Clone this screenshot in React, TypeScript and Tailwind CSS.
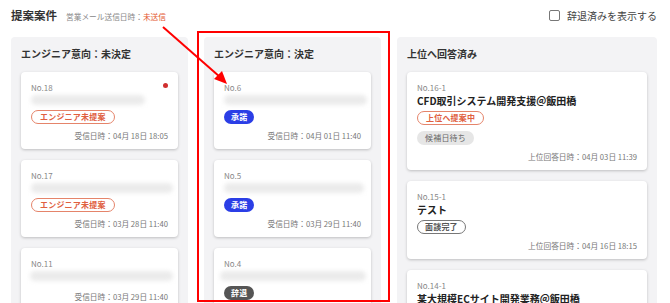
type Tone = 'orange' | 'blue' | 'dark' | 'soft' | 'gray';

const badgeClass: Record<Tone, string> = {
  orange: 'border border-[#e5846a] text-[#e0603f] bg-white px-[8px]',
  blue: 'bg-[#2b3ee6] text-white px-[7px]',
  dark: 'bg-[#555555] text-white px-[7px]',
  soft: 'bg-[#e6e6e6] text-[#666] px-[8px] font-normal',
  gray: 'border border-[#777] text-[#555] bg-white px-[7px]',
};

const Badge = ({ tone, label }: { tone: Tone; label: string }) => (
  <span
    className={`inline-flex h-[14px] items-center rounded-full text-[8px] font-bold leading-none tracking-[0.2px] ${badgeClass[tone]}`}
  >
    {label}
  </span>
);

const Blur = ({ w, left = 0 }: { w: number; left?: number }) => (
  <div className="mt-[1px] h-[10px]">
    <div
      className="h-[10px] rounded-full bg-[#ebebeb] blur-[2px]"
      style={{ width: w, marginLeft: left }}
    />
  </div>
);

type Inquiry = {
  no: string;
  blur: number;
  blurLeft?: number;
  badge?: { tone: Tone; label: string };
  date?: string;
  dot?: boolean;
};

const InquiryCard = ({ item }: { item: Inquiry }) => (
  <div className="relative rounded-[4px] bg-white px-[10px] pt-[10px] pb-[7px] shadow-[0_1px_3px_rgba(0,0,0,0.22)]">
    {item.dot && <span className="absolute right-[10px] top-[11px] h-[5px] w-[5px] rounded-full bg-[#d02f2f]" />}
    <div className="text-[8px] leading-[12px] text-[#888]">{item.no}</div>
    <Blur w={item.blur} left={item.blurLeft} />
    {item.badge && (
      <div className="mt-[5px] flex">
        <Badge tone={item.badge.tone} label={item.badge.label} />
      </div>
    )}
    {item.date && (
      <div className={`${item.badge ? 'mt-[6px]' : 'mt-[10px]'} text-right text-[7.7px] leading-[12px] text-[#777]`}>
        受信日時：{item.date}
      </div>
    )}
  </div>
);

type Answer = {
  no: string;
  title: string;
  badges: { tone: Tone; label: string }[];
  date: string;
};

const AnswerCard = ({ item }: { item: Answer }) => (
  <div className="rounded-[4px] bg-white px-[10px] pt-[10px] pb-[7px] shadow-[0_1px_3px_rgba(0,0,0,0.22)]">
    <div className="text-[8px] leading-[12px] text-[#888]">{item.no}</div>
    <div className="text-[10px] font-bold leading-[14px] text-[#222]">{item.title}</div>
    {item.badges.map((b, i) => (
      <div key={b.label} className={`${i === 0 ? 'mt-[3px]' : 'mt-[6px]'} flex`}>
        <Badge tone={b.tone} label={b.label} />
      </div>
    ))}
    <div className="mt-[6px] text-right text-[7.7px] leading-[12px] text-[#777]">上位回答日時：{item.date}</div>
  </div>
);

const undecided: Inquiry[] = [
  { no: 'No.18', blur: 114, badge: { tone: 'orange', label: 'エンジニア未提案' }, date: '04月 18日 18:05', dot: true },
  { no: 'No.17', blur: 142, badge: { tone: 'orange', label: 'エンジニア未提案' }, date: '03月 28日 11:40' },
  { no: 'No.11', blur: 143, blurLeft: -1, date: '03月 29日 11:40' },
];

const decided: Inquiry[] = [
  { no: 'No.6', blur: 143, badge: { tone: 'blue', label: '承諾' }, date: '04月 01日 11:40' },
  { no: 'No.5', blur: 140, badge: { tone: 'blue', label: '承諾' }, date: '03月 29日 11:40' },
  { no: 'No.4', blur: 146, blurLeft: -4, badge: { tone: 'dark', label: '辞退' }, date: '03月 27日 11:40' },
];

const answered: Answer[] = [
  {
    no: 'No.16-1',
    title: 'CFD取引システム開発支援＠飯田橋',
    badges: [
      { tone: 'orange', label: '上位へ提案中' },
      { tone: 'soft', label: '候補日待ち' },
    ],
    date: '04月 03日 11:39',
  },
  {
    no: 'No.15-1',
    title: 'テスト',
    badges: [{ tone: 'gray', label: '面談完了' }],
    date: '04月 16日 18:15',
  },
  {
    no: 'No.14-1',
    title: '某大規模ECサイト開発業務＠飯田橋',
    badges: [{ tone: 'orange', label: '上位へ提案中' }],
    date: '04月 02日 10:12',
  },
];

const Column = ({ title, width, children }: { title: string; width: string; children: React.ReactNode }) => (
  <div className={`${width} shrink-0 rounded-[4px] bg-[#f3f3f5] px-[10px] pt-[10px] pb-[10px]`}>
    <h3 className="mb-[11px] text-[10px] font-bold leading-[14px] text-[#333]">{title}</h3>
    <div className="flex flex-col gap-[11px]">{children}</div>
  </div>
);

export default function App() {
  return (
    <div
      className="relative h-[303px] w-[670px] overflow-hidden bg-white"
      style={{ fontFamily: '"Noto Sans CJK JP", "Noto Sans", sans-serif' }}
    >
      <div className="flex h-[32px] items-center px-[11px]">
        <h1 className="text-[11.5px] font-bold text-[#333]">提案案件</h1>
        <span className="ml-[9px] mt-[2px] text-[7.7px] text-[#888]">
          営業メール送信日時：<span className="text-[#e4572e]">未送信</span>
        </span>
        <label className="ml-auto mr-[2px] -mt-[2px] flex items-center">
          <span className="h-[11px] w-[11px] rounded-[2px] border border-[#777] bg-white" />
          <span className="ml-[7px] text-[10px] text-[#444]">辞退済みを表示する</span>
        </label>
      </div>

      <div className="mt-[5px] flex items-start gap-[16px] px-[11px]">
        <Column title="エンジニア意向：未決定" width="w-[177px]">
          {undecided.map((it) => (
            <InquiryCard key={it.no} item={it} />
          ))}
        </Column>
        <Column title="エンジニア意向：決定" width="w-[177px]">
          {decided.map((it) => (
            <InquiryCard key={it.no} item={it} />
          ))}
        </Column>
        <Column title="上位へ回答済み" width="w-[260px]">
          {answered.map((it) => (
            <AnswerCard key={it.no} item={it} />
          ))}
        </Column>
      </div>

      {/* annotation overlay */}
      <div className="pointer-events-none absolute left-[197px] top-[31px] h-[271px] w-[193px] border-2 border-[#ff0000]" />
      <svg className="pointer-events-none absolute left-0 top-0" width="670" height="303">
        <line x1="163" y1="27" x2="220" y2="77" stroke="#ff0000" strokeWidth="2" />
        <polygon points="227,84 214,79 222,71" fill="#ff0000" />
      </svg>
    </div>
  );
}
